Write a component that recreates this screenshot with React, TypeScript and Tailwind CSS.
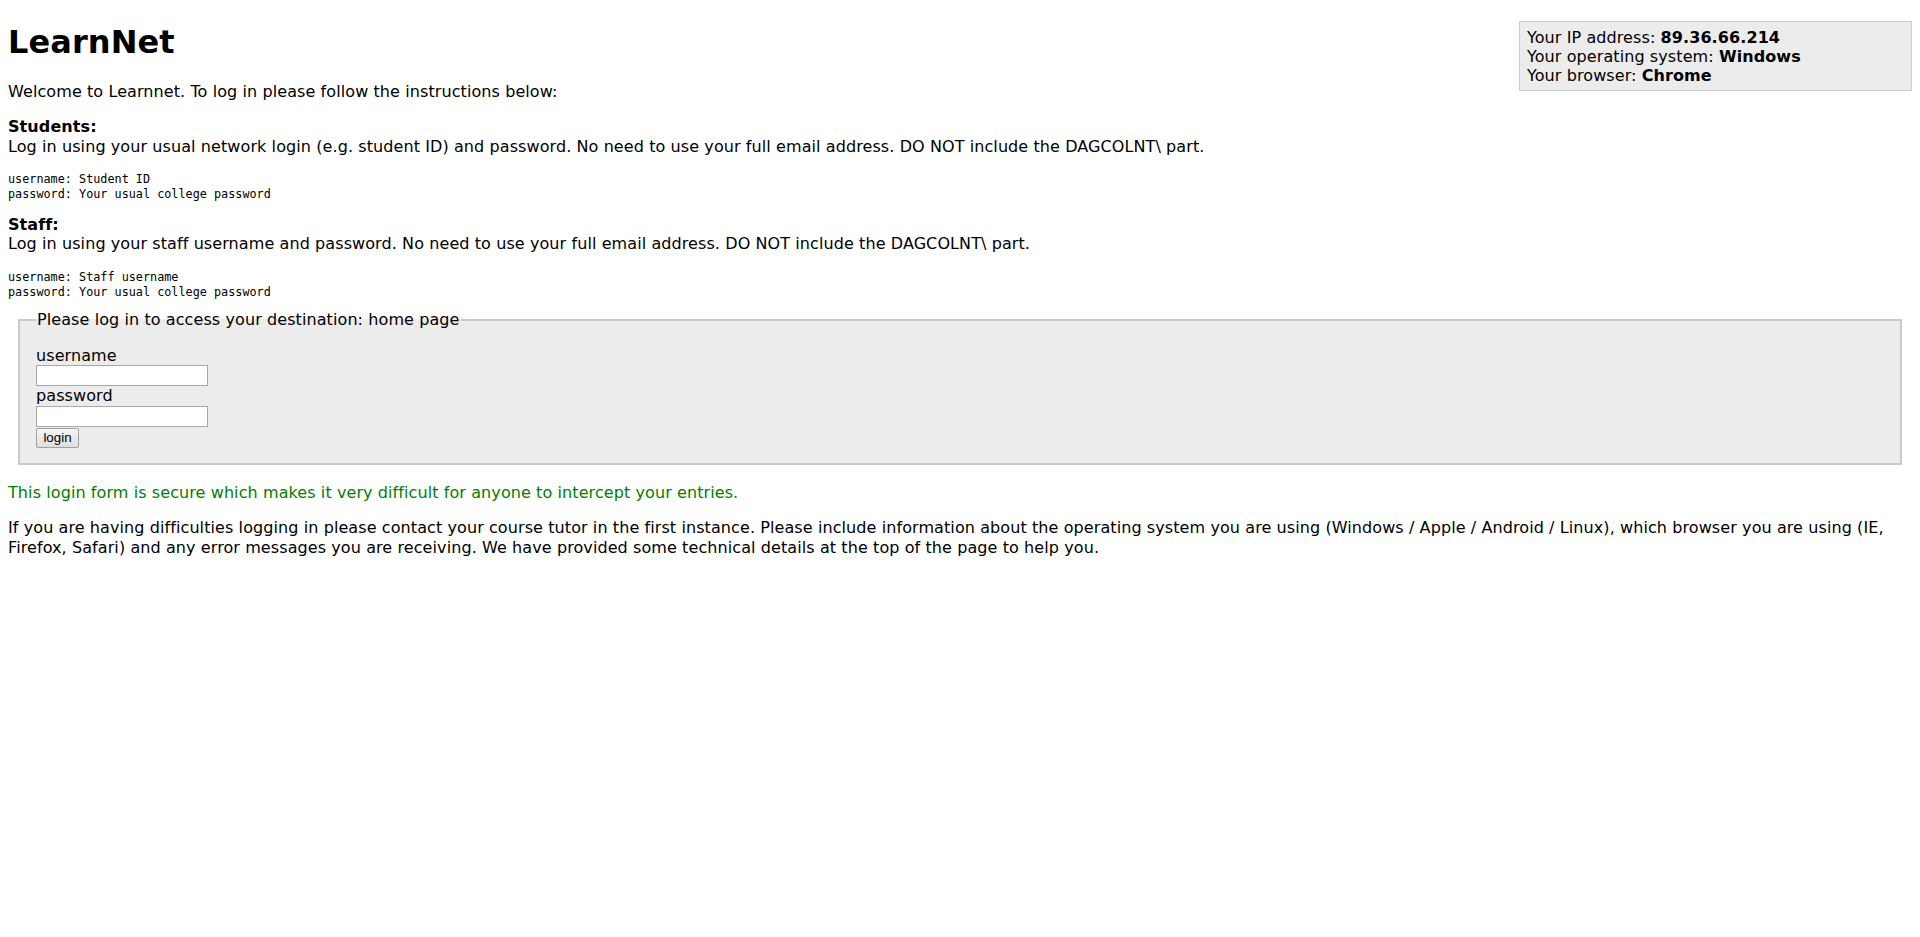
import React from "react";

const body = "font-['DejaVu_Sans','Verdana',sans-serif] text-[16px] leading-[19.44px] tracking-[0.09px] text-black";
const mono = "font-['DejaVu_Sans_Mono','Liberation_Mono',monospace] text-[11.8px] leading-[14.6px] tracking-normal text-black whitespace-pre";

export default function App() {
  return (
    <div className={`min-h-[937px] bg-white px-[8px] pt-[8px] pb-[8px] ${body}`}>
      <div className="float-right mt-[13px] w-[393px] border border-[#cccccc] bg-[#ececec] px-[7px] pt-[5.5px] pb-[4px]">
        <div>
          Your IP address: <b>89.36.66.214</b>
        </div>
        <div>
          Your operating system: <b>Windows</b>
        </div>
        <div>
          Your browser: <b>Chrome</b>
        </div>
      </div>

      <h1 className="mt-[15px] text-[32px] leading-[38.9px] font-bold">LearnNet</h1>

      <p className="mt-[20px]">Welcome to Learnnet. To log in please follow the instructions below:</p>

      <p className="mt-[16px]">
        <b>Students:</b>
        <br />
        Log in using your usual network login (e.g. student ID) and password. No need to use your full email
        address. DO NOT include the DAGCOLNT\ part.
      </p>
      <div className={`mt-[15.9px] ${mono}`}>
        {"username: Student ID\npassword: Your usual college password"}
      </div>

      <p className="mt-[13.7px]">
        <b>Staff:</b>
        <br />
        Log in using your staff username and password. No need to use your full email address. DO NOT include
        the DAGCOLNT\ part.
      </p>
      <div className={`mt-[16.3px] ${mono}`}>
        {"username: Staff username\npassword: Your usual college password"}
      </div>

      <fieldset className="mx-[10px] mt-[10.5px] border-2 border-[#c9c9c9] bg-[#ececec] px-[16px] pt-[16.7px] pb-[15px]">
        <legend className="px-[1px]">Please log in to access your destination: home page</legend>
        <label className="block">username</label>
        <input
          type="text"
          className="block h-[21px] w-[172px] border border-[#a9a9a9] bg-white px-[2px] text-[13px]"
        />
        <label className="block">password</label>
        <input
          type="password"
          className="block h-[21px] w-[172px] border border-[#a9a9a9] bg-white px-[2px] text-[13px]"
        />
        <button
          type="button"
          className="mt-[1px] block h-[20px] w-[43px] rounded-[2px] border border-[#a0a0a0] bg-gradient-to-b from-[#f6f6f6] to-[#dedede] font-['Liberation_Sans',Arial,sans-serif] text-[13.33px] leading-[16px] tracking-normal text-black"
        >
          login
        </button>
      </fieldset>

      <p className="mt-[18.2px] text-[#008000]">
        This login form is secure which makes it very difficult for anyone to intercept your entries.
      </p>

      <p className="mt-[16px]">
        If you are having difficulties logging in please contact your course tutor in the first instance. Please
        include information about the operating system you are using (Windows / Apple / Android / Linux), which
        browser you are using (IE,
        <br />
        Firefox, Safari) and any error messages you are receiving. We have provided some technical details at the
        top of the page to help you.
      </p>
    </div>
  );
}
